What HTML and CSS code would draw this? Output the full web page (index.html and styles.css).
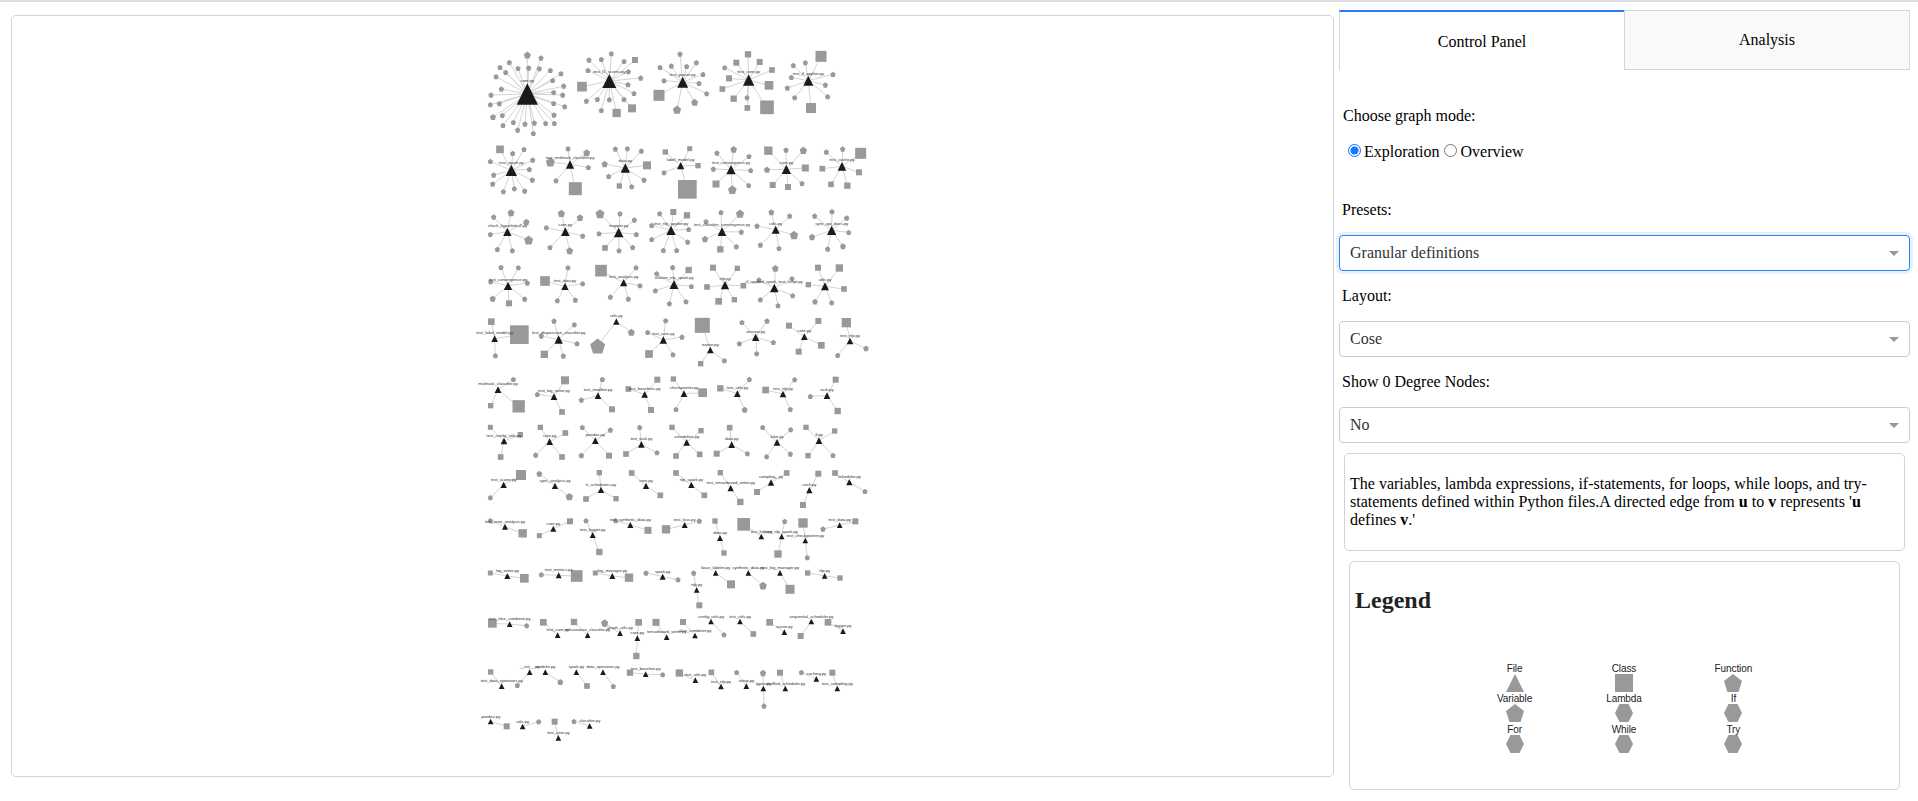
FILE: index.html
```html
<!DOCTYPE html>
<html lang="en">
<head>
<meta charset="utf-8">
<title>Code graph explorer</title>
<link rel="stylesheet" href="styles.css">
</head>
<body>
<main class="app">
  <section class="graph-panel">
    <svg class="graph" id="graph" viewBox="-1374 -72 3963 2280"></svg>
  </section>
  <aside class="side">
    <nav class="tabs">
      <div class="tab tab-active">Control Panel</div>
      <div class="tab">Analysis</div>
    </nav>
    <p class="mode-title">Choose graph mode:</p>
    <div class="modes">
      <label class="mode"><span class="radio radio-on"></span>Exploration</label>
      <label class="mode"><span class="radio"></span>Overview</label>
    </div>
    <p class="field-label">Presets:</p>
    <div class="select select-focus"><span>Granular definitions</span><span class="arrow"></span></div>
    <p class="field-label">Layout:</p>
    <div class="select"><span>Cose</span><span class="arrow"></span></div>
    <p class="field-label">Show 0 Degree Nodes:</p>
    <div class="select"><span>No</span><span class="arrow"></span></div>
    <div class="description">The variables, lambda expressions, if-statements, for loops, while loops, and try-statements defined within Python files.A directed edge from <b>u</b> to <b>v</b> represents '<b>u</b> defines <b>v</b>.'</div>
    <div class="legend">
      <h2 class="legend-title">Legend</h2>
      <div class="legend-grid">
        <div class="legend-item"><span>File</span><svg class="shape" viewBox="0 0 18 18"><path d="M9 0L18 18H0Z"/></svg></div>
        <div class="legend-item"><span>Class</span><svg class="shape" viewBox="0 0 18 18"><path d="M0 0H18V18H0Z"/></svg></div>
        <div class="legend-item"><span>Function</span><svg class="shape" viewBox="0 0 18 18"><path d="M9 0L18 6.9L14.6 18H3.4L0 6.9Z"/></svg></div>
        <div class="legend-item"><span>Variable</span><svg class="shape" viewBox="0 0 18 18"><path d="M9 0L18 6.9L14.6 18H3.4L0 6.9Z"/></svg></div>
        <div class="legend-item"><span>Lambda</span><svg class="shape" viewBox="0 0 18 18"><path d="M4.5 0H13.5L18 9L13.5 18H4.5L0 9Z"/></svg></div>
        <div class="legend-item"><span>If</span><svg class="shape" viewBox="0 0 18 18"><path d="M4.5 0H13.5L18 9L13.5 18H4.5L0 9Z"/></svg></div>
        <div class="legend-item"><span>For</span><svg class="shape" viewBox="0 0 18 18"><path d="M4.5 0H13.5L18 9L13.5 18H4.5L0 9Z"/></svg></div>
        <div class="legend-item"><span>While</span><svg class="shape" viewBox="0 0 18 18"><path d="M4.5 0H13.5L18 9L13.5 18H4.5L0 9Z"/></svg></div>
        <div class="legend-item"><span>Try</span><svg class="shape" viewBox="0 0 18 18"><path d="M4.5 0H13.5L18 9L13.5 18H4.5L0 9Z"/></svg></div>
      </div>
    </div>
  </aside>
</main>
<script src="graph.js"></script>
</body>
</html>
```
FILE: styles.css
```css
* { box-sizing: border-box; }
body {
  margin: 0;
  height: 801px;
  overflow: hidden;
  border-top: 2px solid #dcdce2;
  background: #fff;
  color: #000;
  font: 16px/18px "Liberation Serif", "Times New Roman", serif;
}
p, h2 { margin: 0; }
.app { display: flex; align-items: flex-start; padding: 8px 8px 0 11px; gap: 5px; }
.graph-panel {
  width: 1323px;
  height: 762px;
  margin-top: 5px;
  border: 1px solid #d3d3d3;
  border-radius: 5px;
}
.graph { display: block; width: 1321px; height: 760px; }
.edge { stroke: #ccc; stroke-width: 2.6; }
.node { fill: #999; }
.file { fill: #1a1a1a; }
.name { fill: #333; font: 13px "Liberation Sans", Arial, sans-serif; letter-spacing: -0.3px; text-anchor: middle; }

.side { width: 571px; }
.tabs { display: flex; height: 60px; }
.tab {
  flex: 1;
  padding-top: 20px;
  text-align: center;
  background: #f9f9f9;
  border: 1px solid #d6d6d6;
}
.tab-active { padding-top: 20.5px; background: #fff; border-top: 2px solid #2b7bff; border-right: 0; border-bottom: 0; }
.mode-title { margin: 36.5px 0 0 4px; }
.modes { display: flex; gap: 4px; margin: 18px 0 40.5px 9px; }
.mode { display: flex; gap: 3px; }
.radio {
  width: 13px;
  height: 13px;
  margin-top: 1px;
  border: 1px solid #767676;
  border-radius: 50%;
}
.mode + .mode .radio { margin-right: 1px; }
.radio-on { border-color: #0075ff; background: radial-gradient(circle, #1a75ff 0 3.7px, #fff 4.4px); }
.field-label { padding-left: 3px; height: 34px; }
.select {
  display: flex;
  justify-content: space-between;
  align-items: center;
  height: 36px;
  margin-bottom: 16px;
  padding: 0 10px;
  border: 1px solid #ccc;
  border-radius: 4px;
  color: #333;
}
.select-focus { border-color: #2680ff; box-shadow: 0 0 0 3px #e5f1ff; }
.arrow { border: 5px solid transparent; border-top-color: #999; border-bottom: 0; }
.description {
  height: 98px;
  margin: -6px 5px 10px;
  padding: 21px 5px 0;
  border: 1px solid #d3d3d3;
  border-radius: 5px;
}
.legend {
  height: 229px;
  margin: 0 10px;
  padding: 24px 5px 0;
  border: 1px solid #d3d3d3;
  border-radius: 5px;
}
.legend-title { font-size: 24px; line-height: 28px; color: #222; }
.legend-grid {
  display: grid;
  grid-template-columns: repeat(3, 109.4px);
  grid-auto-rows: 30.4px;
  justify-content: center;
  margin: 49px 1px 0 0;
  color: #222;
  font: 10px/11px "Liberation Sans", Arial, sans-serif;
  letter-spacing: -0.1px;
}
.legend-item { display: flex; flex-direction: column; align-items: center; }
.shape { display: block; width: 18px; height: 18px; fill: #999; }
```
FILE: graph.js
```js
// Each block has an origin; each row is "x,bottom,width,label | nodes".
// Nodes are kind + "x,y[,size]" where s = class and p = function or variable.
const blocks = [
  [0, 0, [
    "172,194,64,core.py|p172,45,21 p213,54 p118,67 p90,82 p107,97 p78,110 p144,85 p176,84 p208,86 p241,91 p273,101 p248,121 p281,138 p251,157 p278,165 p94,147 p63,165 p61,194 p88,191 p69,231,18 p97,226 p99,256 p130,247 p143,270 p165,252 p193,249 p190,280 p227,250 p253,250 p252,225 p251,190 p284,200",
    "418,144,42,test_f1_scores.py|p357,60 p394,58 p424,41 p462,64 s495,60,18 p354,91 p475,95 p512,114 p474,134 p492,160 p462,178 s486,205,24 s440,219,25 p418,179 p394,211 p382,178 p349,183 s336,140,29",
    "124,408,34,test_spark.py|s90,328,23 p128,340 p162,328 p188,360 p178,388 p187,420 p164,453 p133,446 p100,455 p68,432 p71,405 p61,364",
    "300,386,25,test_multitask_classifier.py|p294,326 p350,338,21 p241,366,27 p355,382 p258,422 s316,446,39",
    "466,398,28,data.py|p436,327 p472,326 p514,333 s531,376,24 p522,420 p485,440 s448,438,16 p416,409 p404,372,19"
  ]],
  [600, 0, [
    "38,143,33,test_parser.py|p30,42 p79,68 p50,79 p4,78 p99,103 p87,130 p110,161 p74,187,21 p21,209,25 s-33,166,33 p-18,122 p-30,82",
    "236,137,34,test_core.py|s234,43,19 s199,68,18 p164,83 s177,115,18 s157,147,17 s191,176,19 p231,173 s232,204,17 s291,202,41 s297,136,26 s306,90,17 s269,66,18",
    "415,137,30,test_tf_applier.py|s453,49,33 p406,68 p370,76 p364,112 p352,144 p374,173 s423,204,30 p473,170 p466,135 p489,103",
    "32,388,22,label_model.py|s59,326,15 s84,377,16 s52,448,56 s-14,336,16 p-18,398",
    "183,403,28,test_convergence.py|p141,339 p191,328,20 p237,349 p242,391 p236,436 p187,449,26 s138,432,21 p130,387",
    "349,402,28,core.py|s295,332,25 p348,330 p400,331,22 s406,384,21 p396,430 s354,441,18 s308,435,18 p291,389,19",
    "516,392,26,test_cache.py|p469,336 p518,327 s572,340,33 s567,397,18 s532,437,19 s483,433,17 s457,386,17"
  ]],
  [0, 480, [
    "112,108,25,check_hyperlinks2.py|p123,38,21 p71,51 p169,66,19 p176,120,27 p127,152 p82,148 p61,103",
    "286,108,26,core.py|p274,40,22 p330,53,20 p338,108 p299,152,21 p240,142 p229,83",
    "446,112,29,mapper.py|p390,41,27 p450,41 p493,60 p499,103 p488,142 p447,152 s405,144,17 p387,101",
    "603,105,28,test_nlp_applier.py|p569,41 s610,36,18 s651,46,19 p656,88 p653,126 p620,151 p580,151 p545,118 p545,76",
    "114,270,25,test_convergence.py|p93,202 p145,203 p172,249 p164,297 s117,310,18 p68,296,19 p62,245",
    "285,270,22,test_data.py|p294,203 s225,243,29 p338,251 p316,300 p262,302",
    "461,259,22,test_analysis.py|p498,203 s393,212,35 p510,257 p475,297 p421,291",
    "612,267,27,sklearn_nlp_spark.py|p608,202 s656,210,19 p664,259 p648,305 p598,311 p556,272 p560,221",
    "74,426,20,test_label_model.py|s64,365,20 s148,404,56 p76,467",
    "266,431,25,test_dirgaussian_classifier.py|p252,363 p313,374 p321,431 p280,468 s223,463,22 p214,408",
    "439,374,19,utils.py|p383,438,45 p484,397,21",
    "580,431,22,test_core.py|p587,362 p533,397 p636,411 s537,462,23 p609,464"
  ]],
  [600, 480, [
    "156,108,26,test_classifier_convergence.py|p153,37 p210,41,25 p108,65 p214,96 p199,140 s151,148,19 p105,117,19",
    "317,101,24,utils.py|p304,37,18 p359,48 p372,105,25 p327,145 p271,135 p261,78",
    "485,105,28,sync_api_docs.py|p434,48 p486,35 p530,54 p536,97 p519,139,18 p473,147 p426,111,19",
    "165,268,25,nlp.py|s129,203,18 s202,205,16 s220,257,17 s193,299,16 s146,304,20 s111,261,17",
    "313,277,26,tf_applied_spark_test_script.py|p316,205,20 p267,240 p366,236 p368,287 p324,317 p271,299",
    "465,271,24,utils.py|s444,203,18 s508,204,22 s415,254,16 s522,267,17 p485,308 p435,305,17",
    "121,460,20,trainer.py|s97,376,45 s92,491,16 p163,482",
    "257,423,22,version.py|p216,367 p291,363 p310,427 p260,461 p208,431",
    "403,420,20,core.py|s357,377,18 s445,363,18 s454,436,20 s386,455,18",
    "540,433,20,test_nlp.py|s529,368,28 p503,466 p588,445,17"
  ]],
  [0, 975, [
    "84,84,20,multitask_classifier.py|p130,43 s62,122,16 s146,124,37",
    "252,105,20,test_log_writer.py|s285,46,24 p202,88 s276,141,17",
    "384,102,20,test_modifier.py|p397,43 p334,105 s426,133,18",
    "524,98,20,test_baselines.py|s562,44,18 s475,72,17 s543,135,18",
    "642,96,20,checkpointer.py|s610,42,16 p618,133 s698,83,26",
    "102,238,20,test_config_utils.py|s61,187,15 s151,209,16 s92,276,17",
    "239,240,20,core.py|s211,187,16 s286,204,17 p197,270 s276,276,17",
    "376,237,20,pandas.py|p337,187 p421,195 p334,271,17 s417,272,18",
    "514,248,20,test_task.py|p509,187 s468,267,17 p561,263",
    "101,369,19,test_scorer.py|s153,330,30 p61,398",
    "255,372,19,sync_analysis.py|p208,326,18 p298,395,22",
    "393,384,19,lr_schedulers.py|s388,323,16 s348,402,17 s438,401,16",
    "528,372,19,core.py|s485,324,17 s571,391,17"
  ]],
  [600, 975, [
    "202,96,20,test_utils.py|s151,70,19 p238,43 p224,134,18",
    "339,97,20,test_nlp.py|s287,75,20 p374,44 p361,133",
    "471,102,20,task.py|s497,44,18 p421,94 s503,138,19",
    "50,242,20,schedulers.py|s6,187,16 s93,197,16 s18,273,17 s89,268,17",
    "185,249,20,data.py|s179,188,17 s140,266,18 p232,266",
    "321,242,20,lake.py|p278,187 p362,194 p290,275 p361,267",
    "447,237,20,tf.py|s408,187,16 s494,198,16 s414,272,16 p489,271",
    "64,369,19,nlp_spark.py|s18,324,17 s103,391,17",
    "182,379,19,test_tensorboard_writer.py|s151,323,16 s211,411,19",
    "303,362,19,sampling_.py|s350,324,17 s261,381,18",
    "418,385,19,cash.py|s445,326,18 s399,420,18",
    "538,361,19,scheduler.py|s495,324,17 p585,379"
  ]],
  [0, 1410, [
    "105,59,18,test_error_analysis.py|p61,32 s158,70,25",
    "250,65,18,core.py|s300,34,18 s208,77,15",
    "368,84,18,test_logger.py|p348,32 s388,126,19",
    "481,54,18,test_synthetic_data.py|p437,32 s534,61,21",
    "112,207,18,log_writer.py|s61,189,15 s163,205,26",
    "266,205,18,test_metrics.py|p214,194 s320,198,35",
    "427,207,18,log_manager.py|s376,189,15 s477,203,25",
    "578,209,18,spark.py|p528,189 p624,209",
    "119,351,17,test_slice_combiner.py|s67,340,26 p170,347",
    "263,384,17,test_core.py|s220,337,20",
    "353,384,17,mfcosewise_classifier.py|s312,336,19",
    "450,378,17,graph_utils.py|p404,339,22",
    "502,393,17,core.py|s506,337,20 s499,438,19",
    "590,390,17,tensorboard_writer.py|s558,337,21",
    "95,537,17,test_data_operators.py|s62,486,16",
    "179,495,17,__init__.py|p142,526",
    "226,495,17,modeler.py|p271,516,18",
    "319,495,17,spark.py|s351,528,17",
    "399,495,17,data_operators.py|p430,529",
    "527,501,17,test_baseline.py|s480,488,19 p578,494",
    "62,643,17,pandas.py|s110,649,18",
    "158,658,17,utils.py|p206,635",
    "265,692,17,test_core.py|s254,635,18",
    "359,656,17,classifier.py|p312,634"
  ]],
  [600, 1410, [
    "44,54,18,test_loss.py|p88,33 s-12,58,25",
    "150,93,18,data.py|s135,33,16 s162,129,16",
    "274,88,17,test_hdp.py|s221,43,38",
    "335,88,17,test_nlp_spark.py|p344,34 s324,132,22",
    "406,100,17,test_checkpointer.py|s399,39,28 p412,143",
    "509,54,17,test_data.py|s556,34,18 p459,57",
    "80,248,17,nlp.py|p71,189 s88,286,18",
    "137,197,17,base_labeler.py|s183,223,24",
    "235,197,17,synthetic_data.py|p279,227,23",
    "330,197,17,test_log_manager.py|s360,238,27",
    "464,206,17,nlp.py|s413,189,16 s510,204,16",
    "75,385,17,slice_combiner.py|s39,336,18",
    "123,343,17,config_utils.py|p162,374",
    "210,343,17,test_utils.py|s250,372,17",
    "343,375,17,scorer.py|s299,337,20",
    "424,343,17,sequential_scheduler.py|s392,378,18",
    "519,372,17,logger.py|s474,337,20",
    "76,519,17,test_utils.py|s28,489,22",
    "153,538,17,test_nlp.py|s124,487,17",
    "229,537,17,setup.py|p200,487",
    "280,544,17,types.py|p279,489,19 p282,588",
    "346,544,17,shuffled_scheduler.py|s330,488,18",
    "439,515,17,caching.py|p394,487",
    "502,544,17,test_sampling.py|s487,488,18"
  ]]
];

const polygon = (points, cls) => `<polygon class="${cls}" points="${points.join(" ")}"/>`;

function node(kind, x, y, size) {
  const r = size / 2;
  if (kind === "s") {
    return `<rect class="node" x="${x - r}" y="${y - r}" width="${size}" height="${size}"/>`;
  }
  return polygon([x, y - r, x + r, y - r * 0.24, x + r * 0.62, y + r, x - r * 0.62, y + r, x - r, y - r * 0.24], "node");
}

let edges = "", nodes = "", names = "";
for (const [ox, oy, rows] of blocks) {
  for (const row of rows) {
    const [hub, list] = row.split("|");
    const [hx, hb, hw, label] = hub.split(",");
    const x = ox + +hx, bottom = oy + +hb, w = +hw;
    for (const item of list.split(" ")) {
      const kind = item[0];
      const [nx, ny, size] = item.slice(1).split(",").map(Number);
      const px = ox + nx, py = oy + ny;
      edges += `<line class="edge" x1="${x}" y1="${bottom - w / 2}" x2="${px}" y2="${py}"/>`;
      nodes += node(kind, px, py, size || 16);
    }
    nodes += polygon([x, bottom - w, x + w / 2, bottom, x - w / 2, bottom], "file");
    names += `<text class="name" x="${x}" y="${bottom - w - 3}">${label}</text>`;
  }
}
document.getElementById("graph").innerHTML = edges + nodes + names;
```
